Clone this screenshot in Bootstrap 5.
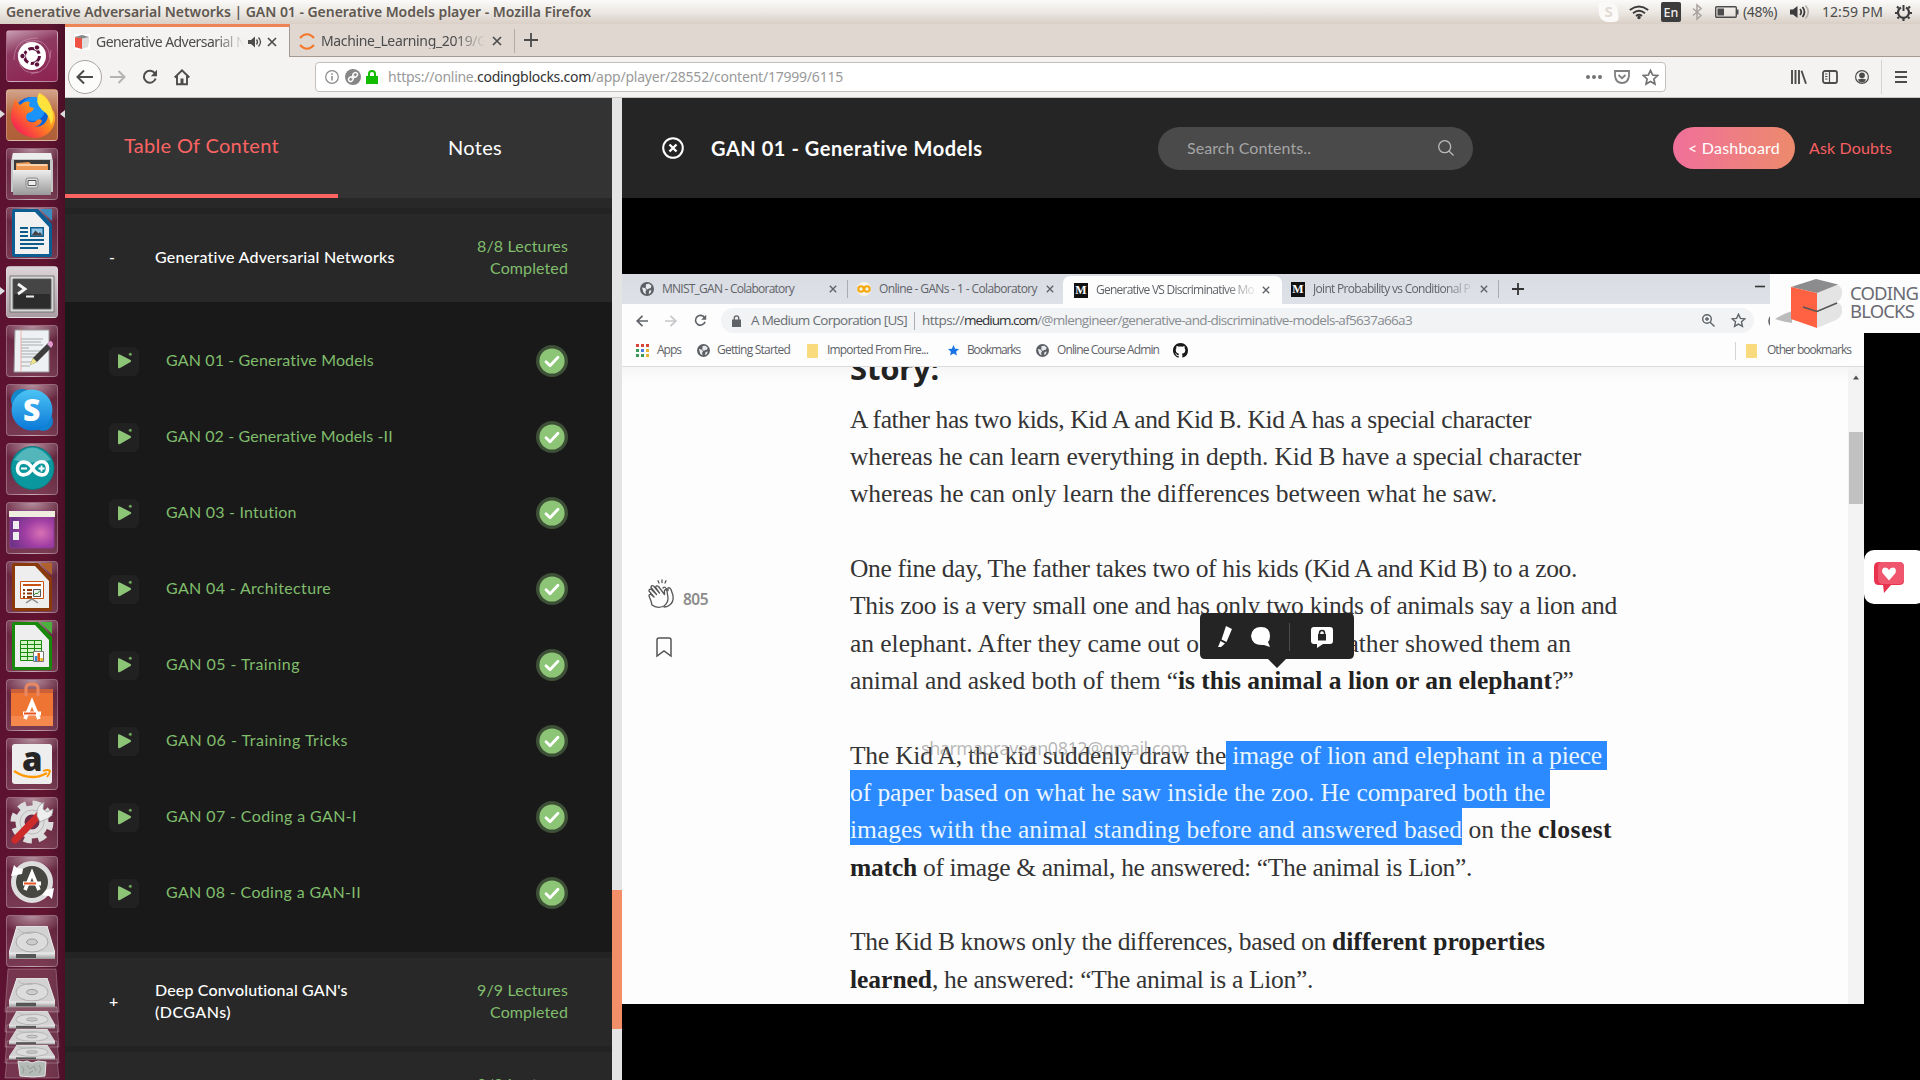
<!DOCTYPE html>
<html lang="en">
<head>
<meta charset="utf-8">
<title>Generative Adversarial Networks | GAN 01 - Generative Models player</title>
<link href="https://cdn.jsdelivr.net/npm/bootstrap@5.3.0/dist/css/bootstrap.min.css" rel="stylesheet">
<style>
html,body{width:1920px;height:1080px;overflow:hidden;background:#000}
body{font-family:"Noto Sans","Open Sans",sans-serif;font-size:14px;line-height:1.2;color:#4c4c4c}
svg{display:block;flex:none;overflow:visible}
.fit{white-space:pre;display:block}
.gridrow{display:grid;align-items:center;align-content:center}
/* desktop panel */
.topbar{height:24px;background:linear-gradient(#fbfaf9,#ece8e3 50%,#d9cfc6);padding-left:6px}
.topbar .ttl{font-weight:600;font-size:14px;color:#5f5851}
.indic{grid-template-columns:28px 32px 31px 23px 28px 47px 32px 73px 25px;width:319px;height:24px}
.indic .fit{font-size:14px}
.lang{width:20px;height:20px;background:#3c3c3c;color:#eee;border-radius:2px;font-size:12.5px;font-weight:500;line-height:21px;text-align:center}
/* launcher */
.launcher{width:65px;height:1056px;background:linear-gradient(90deg,#5c1230,#601430 70%,#4b0f27);padding:6px 0 0 6px;overflow:hidden;position:relative}
.tile{width:52px;height:52px;margin-bottom:7px;border-radius:4px;border:1px solid rgba(255,255,255,.25);background:radial-gradient(ellipse 34px 18px at 50% 0,rgba(255,255,255,.5),rgba(255,255,255,0)),linear-gradient(rgba(255,255,255,.06),rgba(255,255,255,.17));flex:none}
.tile svg{margin:-1px}
.tile.t-dash{background:linear-gradient(160deg,#c9a0b4,#8f3a62 35%,#8d2250)}
.tile.t-fox{background:linear-gradient(#d3a48c,#b5663c 50%,#b06038)}
.tile.t-term{background:linear-gradient(#dcd4d8,#a99ca2)}
.pip{position:absolute;width:0;height:0;border:4px solid transparent}
.pip.l{left:0;border-left:5px solid #ddd;border-right:0}
.pip.r{right:0;border-right:5px solid #ddd;border-left:0}
.pip.a{top:86px}.pip.b{top:263px}
.stack{margin:-5px 0 0 -1px}
/* browser chrome */
.win{width:1855px}
.tabs{height:33px;background:#dfd7d0;border-bottom:1px solid #a39a93}
.ftab{height:33px}
.ftab.on{width:225px;background:#f4f3f1;border-top:3px solid #ee8356;border-right:1px solid #a39a93;grid-template-columns:22px 152px 19px 14px;padding-left:9px}
.ftab.off{width:225px;grid-template-columns:22px 171px 21px;padding-left:9px;border-right:1px solid #b3aba4;height:24px;margin-top:5px}
.ftab .fit{font-size:14px;color:#4c4c4c}
.fade1{-webkit-mask-image:linear-gradient(90deg,#000 78%,transparent 98%)}
.fade2{-webkit-mask-image:linear-gradient(90deg,#000 78%,transparent 96%)}
.tools{height:41px;background:#f4f3f1;border-bottom:1px solid #cac6c3;padding-left:3px;grid-template-columns:42px 32px 32px 141px 1476px 31px 33px 26px 14px 25px}
.url{width:1351px;height:30px;border:1px solid #c3bfbc;border-radius:4px;background:#fff;grid-template-columns:20px 21px 22px 1198px 28px 28px 20px;padding-left:9px}
.url .fit{font-size:14px;color:#9a9a9a}
.url .dk{color:#333}
.vr1{width:1px;background:#d6d3d0;height:34px}
/* course sidebar */
.side{width:547px;height:982px;background:#282828;overflow:hidden;font-family:Lato,sans-serif;font-size:16px;color:#fff}
.sidehd{height:100px;background:#333;margin-bottom:10px}
.sidehd>div{width:273px;height:100px}
.sidehd .act{border-bottom:4px solid #fc6464;color:#fc6464;font-size:20px;padding-top:35px;padding-left:59px}
.sidehd .oth{font-size:20px;padding:37px 0 0 110px}
.band{height:6px;background:#232323}
.sec{height:88px;grid-template-columns:45px 242px 171px;padding:0 0 2px 45px;line-height:22px;font-weight:500}
.sec .pm{margin-left:-1px}
.sec .cnt{color:#80bd6c;font-weight:400}
.grn{color:#80bd6c;margin-top:-2px}
.lects{height:650px;background:#191919;padding:21px 0 0 44px}
.lect{height:76px;grid-template-columns:57px 370px 34px}
.scr{width:10px;height:982px;background:#e4e4e4;padding-top:792px}
.scr div{height:139px;background:#f28e68}
/* player */
.main{width:1298px;height:982px;background:#000;font-family:Lato,sans-serif}
.phead{height:100px;background:#252525;grid-template-columns:49px 447px 515px 136px 111px;padding-left:40px}
.phead .fit{margin-top:-1px}
.phead .ttl{font-size:20px;font-weight:700;color:#fff}
.srch{width:315px;height:43px;border-radius:22px;background:#4a4a4a;padding:0 19px 0 29px;font-size:16px;color:#a5a5a5}
.dash{width:122px;height:42px;border-radius:21px;background:linear-gradient(90deg,#f0709a,#ec8a6c);color:#fff;font-size:16px;padding-left:15px}
.ask{font-size:16px;color:#f75f62}
.video{width:1242px;height:730px;margin-top:76px;background:#fdfdfd;position:relative;font-family:"Open Sans","Noto Sans",sans-serif;color:#5f6368}
.vtabs{height:30px;background:linear-gradient(#d9dce2,#dee1e8);padding-left:18px;grid-template-columns:22px 167px 18px 10px 22px 167px 17px 228px 22px 167px 18px 14px 243px 20px}
.vtabs .fit,.vmarks .fit{font-size:12px}
.von{width:219px;height:28px;margin-top:2px;background:#fdfdfd;border-radius:7px 7px 0 0;grid-template-columns:22px 166px 20px;padding-left:11px}
.vsep{width:1px;height:18px;background:#a9adb3}
.vaddr{height:33px;padding-left:14px;grid-template-columns:29px 29px 27px 1046px 20px}
.vpill{width:1033px;height:25px;border-radius:13px;background:#f1f3f4;grid-template-columns:19px 163px 8px 780px 29px 20px;padding-left:11px;font-size:13.5px;color:#6a6e73}
.vpill .pa{color:#888c91}
.vpill .dk{color:#303236}
.vmarks{height:30px;border-bottom:1px solid #dcdcdc;padding:0 0 2px 14px;grid-template-columns:21px 40px 20px 90px 20px 120px 20px 69px 21px 116px 562px 11px 21px 90px}
.fold{width:11px;height:14px;background:#f9da7c;border-radius:1px}
.mm{width:14px;height:15px;background:#111;color:#fff;font:bold 12px/15px "Liberation Serif",serif;text-align:center}
.page{height:637px;background:linear-gradient(#f6f6f6,#fdfdfd 14px);overflow:hidden}
.rail{width:228px;padding:213px 0 0 26px}
.rail .n{font-size:15.5px;font-weight:600;font-family:"Noto Sans",sans-serif;color:#8c8c8c}
.art{width:998px;font-family:"Liberation Serif",serif;font-size:25.5px;color:#343434}
.art h3{display:flex;font:bold 31px/36px "Noto Sans",sans-serif;color:#222;height:29.8px;margin:0}
.art h3 span{margin-top:-17px}
.ln{display:flex;height:37.333px;line-height:46px}
.ln b{font-weight:700;color:#222}
.ln.gap{margin-bottom:37.333px}
.sel{background:#2b8aff;color:#e9f5ff;padding-right:5px;height:37.6px}
.sel.first{background:linear-gradient(transparent 8px,#2b8aff 8px)}
.sel.last{padding-right:0}
.vscr{width:16px;background:#f3f3f3;padding:7px 1px 0}
.vscr div{height:72px;background:#c1c1c1;margin-top:52px}
.logo{position:absolute;left:1148px;top:0;width:150px;height:59px;background:#fdfdfd;padding-left:5px}
.logo .nm{font:400 18.5px/18px "Noto Sans",sans-serif;color:#6a6b73;padding:10px 0 0 75px}
.logo svg{position:absolute;left:5px;top:5px}
.pop{position:absolute;left:578px;top:339px}
.wmk{position:absolute;left:299px;top:462px;font:18px/24px "Noto Sans",sans-serif;color:rgba(125,125,125,.55)}
.fb{position:absolute;left:1864px;top:550px;width:62px;height:54px;background:#fff;border-radius:10px;padding:12px 0 0 10px}
</style>
</head>
<body>
<svg width="0" height="0" class="position-absolute">
<defs>
<linearGradient id="gGrey" x1="0" y1="0" x2="0" y2="1"><stop offset="0" stop-color="#eee"/><stop offset="1" stop-color="#999"/></linearGradient>
<linearGradient id="gSky" x1="0" y1="0" x2="0" y2="1"><stop offset="0" stop-color="#4cc4f4"/><stop offset="1" stop-color="#0a78d8"/></linearGradient>
<linearGradient id="gFox" x1="1" y1="0" x2="0" y2="1"><stop offset="0" stop-color="#ffe040"/><stop offset=".45" stop-color="#ff8a1c"/><stop offset=".8" stop-color="#f8324a"/><stop offset="1" stop-color="#c0148c"/></linearGradient>
<radialGradient id="gPur" cx=".7" cy=".6" r=".7"><stop offset="0" stop-color="#d872b4"/><stop offset=".5" stop-color="#a23fa4"/><stop offset="1" stop-color="#6e3389"/></radialGradient>
<symbol id="x" viewBox="0 0 10 10"><path d="M1 1l8 8M9 1l-8 8" fill="none" stroke="currentColor" stroke-width="1.7"/></symbol>
<symbol id="globe" viewBox="0 0 14 14"><circle cx="7" cy="7" r="7" fill="#5c5f64"/><path d="M2 5.500l3 .5 1.500 2-1 1.500 .5 3-2.500-2zM6 2.200L9 1.800l2.500 2-.8 2.500-2 .2-1.200 1-1.800-1.500zM9.200 8.500l2.300-.3-.8 2.500-2 1.500z" fill="#e8eaed"/></symbol>
<symbol id="star" viewBox="0 0 16 16"><path d="M8 1.300l2 4.400 4.800.5-3.600 3.200 1 4.800L8 11.800l-4.200 2.400 1-4.800L1.200 6.200 6 5.700z"/></symbol>
<symbol id="disk" viewBox="0 0 46 34"><path d="M8 0h30l8 27H0z" fill="#d2d2d2" stroke="#efefef"/><ellipse cx="23" cy="16" rx="16" ry="10" fill="#dcdcdc" stroke="#aaa"/><ellipse cx="23" cy="16" rx="5.500" ry="3" fill="#ccc" stroke="#999"/><path d="M9 3q6 7 18 3" fill="none" stroke="#b5b5b5"/><path d="M0 27h46v6H0z" fill="url(#gGrey)"/><path d="M7 28h20v4H7z" fill="#555"/></symbol>
<symbol id="play" viewBox="0 0 30 29"><rect width="30" height="29" rx="6" fill="#212121"/><path d="M9 8.500q0-2 1.800-1L21.500 13q1.500 1 0 2L11 21q-2 1-2-1z" fill="#8dc577"/><circle cx="21.300" cy="7.300" r="1.500" fill="#6fa35c"/></symbol>
<symbol id="ok" viewBox="0 0 32 32"><circle cx="16" cy="16" r="16" fill="#3d4f36"/><circle cx="16" cy="16" r="12.600" fill="#8dc577"/><path d="M10 16.800l4 4 8-8.500" fill="none" stroke="#fff" stroke-width="2.800" stroke-linecap="round" stroke-linejoin="round"/></symbol>
<symbol id="reload" viewBox="0 0 16 16"><path d="M13.600 9.500A6 6 0 1 1 13 4.600" fill="none" stroke="currentColor" stroke-width="2"/><path d="M15 .8v6.400H8.800z" fill="currentColor"/></symbol>
</defs>
</svg>

<header class="topbar d-flex justify-content-between align-items-center">
  <span class="fit ttl" data-w="585">Generative Adversarial Networks | GAN 01 - Generative Models player - Mozilla Firefox</span>
  <div class="indic gridrow">
    <svg width="21" height="22" viewBox="0 0 21 22" transform="translate(-3,0)"><path d="M3 1h9q8 2 8 11 3 10-6 9H9q-8-2-8-9Q-1 3 3 1z" fill="#fbfaf9"/><text x="6.500" y="16" font-size="15" font-weight="700" fill="#e2dbd4">S</text></svg>
    <svg width="20" height="14" viewBox="0 0 20 14" fill="none" stroke="#3c3c3c" stroke-width="1.900"><path d="M.8 5Q10-2 19.200 5M4 8.200q6-4.700 12 0M7 11q3-2.300 6 0"/><circle cx="10" cy="12.500" r=".8"/></svg>
    <span class="lang">En</span>
    <svg width="10" height="16" viewBox="0 0 10 16" fill="none" stroke="#aaa39d" stroke-width="1.500"><path d="M1 4.500l8 7L5 15V1l4 3.500-8 7"/></svg>
    <svg width="24" height="12" viewBox="0 0 24 12"><rect x=".7" y=".7" width="20.600" height="10.600" rx="1" fill="none" stroke="#4c4c4c" stroke-width="1.400"/><path d="M2.500 2.500h6.500v7H2.500zM22 3.500h1.500v5H22z" fill="#4c4c4c"/></svg>
    <span class="fit" data-w="34">(48%)</span>
    <svg width="20" height="16" viewBox="0 0 20 16"><path d="M0 5.500h3L7.500 2v12L3 10.500H0z" fill="#3c3c3c"/><path d="M10 5q2.500 3 0 6M12.500 3q4 5 0 10" stroke="#3c3c3c" stroke-width="1.800" fill="none"/><path d="M15.500 1.500q5.500 6.500 0 13" stroke="#b5aea7" stroke-width="1.600" fill="none"/></svg>
    <span class="fit" data-w="61">12:59 PM</span>
    <svg width="17" height="17" viewBox="0 0 17 17" fill="none" stroke="#3c3c3c"><path d="M11 3.500a5.500 5.500 0 1 1-5 0" stroke-width="2.200"/><path d="M8.500 1v6" stroke-width="2"/><path d="M3.500 4L2 2.500M13.500 4L15 2.500M2.500 9H0M17 9h-2.500M4 13l-1.500 1.500M13 13l1.500 1.500M8.500 14v3" stroke-width="2.200"/></svg>
  </div>
</header>

<div class="d-flex">
<nav class="launcher d-flex flex-column">
  <i class="pip l a"></i><i class="pip r a"></i><i class="pip l b"></i>
  <div class="tile t-dash"><svg width="52" height="52" viewBox="0 0 52 52"><g fill="none" stroke="#d9a5bf" stroke-opacity=".5"><path d="M8 30Q8 8 32 8M20 12q22-6 24 16M45 20q0 22-20 24M32 42Q12 46 12 22"/></g><circle cx="26" cy="26" r="14" fill="#fff"/><circle cx="26" cy="26" r="7.500" fill="none" stroke="#5a1038" stroke-width="3" stroke-dasharray="13 2.700"/><g fill="#5a1038" stroke="#fff"><circle cx="16.500" cy="26" r="2.700"/><circle cx="31" cy="17.500" r="2.700"/><circle cx="31" cy="34.500" r="2.700"/></g></svg></div>
  <div class="tile t-fox"><svg width="52" height="52" viewBox="0 0 52 52"><circle cx="26" cy="27" r="19" fill="#0a62d8"/><circle cx="27" cy="20" r="12" fill="#1a94fb"/><path d="M9 10l5 6q5-5 10-3-2 3 0 5l4 1q-1 4-6 5-4 3 0 8 6 3 9-1 4-2 5 1-2 5-8 6 13 0 14-12 0-8-5-12-6-6-3-10 10 5 11 15 5 4 4 13-3 15-19 17Q9 47 5 30q0-8 2-13z" fill="url(#gFox)"/><path d="M33 4q12 8 13 17 3 8-1 15-1-10-9-15-8-8-3-17z" fill="#ffe33c"/></svg></div>
  <div class="tile"><svg width="52" height="52" viewBox="0 0 52 52"><path d="M7 5h38l2 8v31H5V13z" fill="#c5c7c7"/><path d="M7 5h38l1 6H6z" fill="#eceded"/><path d="M8 12h36v12H8z" fill="#3a3a3a"/><path d="M10 15l13-1 2 2h17v8H10z" fill="#ef9a54"/><path d="M11 17h30" stroke="#fce3c8" stroke-width="1.500"/><path d="M7 22h38v25H7z" fill="url(#gGrey)"/><rect x="20" y="30" width="12" height="10" rx="2" fill="#ddd" stroke="#888"/><path d="M22 32.500h8v5h-8z" fill="#eee" stroke="#555"/></svg></div>
  <div class="tile"><svg width="52" height="52" viewBox="0 0 52 52"><path d="M8 2h24l14 15v31q0 2-2 2H8q-2 0-2-2V4q0-2 2-2z" fill="#0b5d92"/><path d="M9 5h20l14 15v27H9z" fill="#f1f1f1"/><path d="M34 2h12v12z" fill="#3c8dbd"/><path d="M14 21h8M14 25h8M14 29h8M14 33h24M14 37h24M14 41h18" stroke="#0d5c8c" stroke-width="2"/><path d="M24 20h14v10H24z" fill="#0d5c8c"/><path d="M25.500 21.500h11v7h-11z" fill="#8fc5e8"/><path d="M25.500 28.500l4-5 3 3 1.500-1.500 2.500 3.500z" fill="#444"/></svg></div>
  <div class="tile t-term"><svg width="52" height="52" viewBox="0 0 52 52"><path d="M4 10h44v36H4z" fill="#d8d8d8" stroke="#777"/><path d="M7 13h38v30H7z" fill="#2c2c2c" stroke="#666"/><path d="M8 14h36v14H8z" fill="#454545"/><path d="M12 18l7 5-7 5" fill="none" stroke="#f3f3f3" stroke-width="2.800"/><path d="M20 30.500h8" stroke="#eee" stroke-width="2"/></svg></div>
  <div class="tile"><svg width="52" height="52" viewBox="0 0 52 52"><path d="M9 5h34v42H8z" fill="#eef1f3" stroke="#999"/><path d="M15 5v42" stroke="#f0b0b0"/><path d="M15 14h22M15 17h20M15 20h22M15 23h8M15 26h22M15 29h20M15 32h14M15 37h12M15 41h9" stroke="#aaa"/><path d="M24 40l3-7 15-15 4 4-15 15z" fill="#3d3d3d"/><path d="M24 40l3-7 4 4z" fill="#f1e58c"/><path d="M41 19l3-3q3 0 3 4l-2 3z" fill="#e09ad0"/></svg></div>
  <div class="tile"><svg width="52" height="52" viewBox="0 0 52 52"><circle cx="16" cy="16" r="11" fill="#1387c9"/><circle cx="37" cy="37" r="10" fill="#1182cf"/><circle cx="26" cy="26" r="20.500" fill="url(#gSky)"/><text x="17" y="37" font-family="Open Sans" font-weight="800" font-size="30" fill="#fff">S</text></svg></div>
  <div class="tile"><svg width="52" height="52" viewBox="0 0 52 52"><circle cx="26.500" cy="25" r="21.500" fill="#0a979d" stroke="#13757b"/><path d="M8 17Q26-8 45 17 26 22 8 17z" fill="#fff" opacity=".3"/><path d="M26.500 25.500c-5-9-15-8-15 0s10 9 15 0 15-9 15 0-10 8-15 0z" fill="none" stroke="#fff" stroke-width="3.600"/><path d="M15 25.500h6M32.500 25.500h6M35.500 22.500v6" stroke="#fff" stroke-width="1.800"/></svg></div>
  <div class="tile"><svg width="52" height="52" viewBox="0 0 52 52"><rect x="4" y="9" width="44" height="37" rx="2" fill="url(#gPur)" stroke="#8c3b97"/><path d="M3 9h46v6H3z" fill="#efece0"/><path d="M7 19h6v8H7zM7 30h6v8H7z" fill="#eee"/></svg></div>
  <div class="tile"><svg width="52" height="52" viewBox="0 0 52 52"><path d="M8 2h24l14 15v31q0 2-2 2H8q-2 0-2-2V4q0-2 2-2z" fill="#8a3a0a"/><path d="M9 5h20l14 15v27H9z" fill="#eee"/><path d="M34 2h12v12z" fill="#b0622e"/><path d="M14.500 20.500h23v17h-23z" fill="#fff" stroke="#c85214"/><path d="M17 24h18" stroke="#c85214" stroke-width="2"/><path d="M17 29h2m2 0h5M17 32.500h2m2 0h5M17 36h2m2 0h5" stroke="#8a3a0a" stroke-width="1.800"/><path d="M27.500 28.500h7v7h-7z" fill="#eee" stroke="#555"/><path d="M28 34l2-2 1 1 3-3.500" stroke="#2a9a2a" fill="none"/><path d="M20 42l6-4 6 4" fill="none" stroke="#888" stroke-width="1.500"/></svg></div>
  <div class="tile"><svg width="52" height="52" viewBox="0 0 52 52"><path d="M8 2h24l14 15v31q0 2-2 2H8q-2 0-2-2V4q0-2 2-2z" fill="#178a0c"/><path d="M9 5h20l14 15v27H9z" fill="#eee"/><path d="M34 2h12v12z" fill="#4bb03e"/><path d="M14.500 20.500h21v20h-21z" fill="#d5f5c8" stroke="#188a0c"/><path d="M14 24.500h22M14 28.500h22M14 32.500h22M14 36.500h22M21.500 20v20M28.500 20v20" stroke="#188a0c"/><path d="M27.500 31.500h10v10h-10z" fill="#fff" stroke="#777"/><path d="M30 36v5" stroke="#2a8ad8" stroke-width="2.500"/><path d="M32.700 33v8" stroke="#d85a14" stroke-width="2.500"/><path d="M35.600 38v3" stroke="#e8b414" stroke-width="2.500"/></svg></div>
  <div class="tile"><svg width="52" height="52" viewBox="0 0 52 52"><path d="M5 10h42v37H5z" fill="#ee7434"/><path d="M5 10h42v4H5z" fill="#c9603a"/><path d="M5 37h42v10H5z" fill="#f5884c"/><path d="M20 17V9q0-4 6-4t6 4v8" fill="none" stroke="#e98860" stroke-width="3"/><path d="M19 40l7-17 7 17" fill="none" stroke="#fff" stroke-width="3.600"/><path d="M17 34.500h18" stroke="#fff" stroke-width="4"/><path d="M18 34.500h12" stroke="#e95420" stroke-width="2"/></svg></div>
  <div class="tile"><svg width="52" height="52" viewBox="0 0 52 52"><rect x="6" y="6" width="40" height="40" rx="3" fill="#eee"/><text x="16" y="33" font-family="Open Sans" font-weight="800" font-size="33" fill="#262626">a</text><path d="M8 33q17 11 33 2" fill="none" stroke="#f90" stroke-width="2.400"/><path d="M37 33q5-2 7 0-1 4-3 6" fill="none" stroke="#f90" stroke-width="1.800"/></svg></div>
  <div class="tile"><svg width="52" height="52" viewBox="0 0 52 52"><circle cx="26" cy="25" r="18.500" fill="none" stroke="#dcdcdc" stroke-width="6" stroke-dasharray="8 6.530"/><circle cx="26" cy="25" r="12" fill="none" stroke="#dedede" stroke-width="9"/><circle cx="26" cy="25" r="12" fill="none" stroke="#bbb"/><path d="M9 43L33 18" stroke="#cf2a2a" stroke-width="7" stroke-linecap="round"/><path d="M31 19q-1-10 7-14l-1 7 4 3 6-3q0 9-9 11l-4 2z" fill="#eee" stroke="#999" stroke-width=".7"/></svg></div>
  <div class="tile"><svg width="52" height="52" viewBox="0 0 52 52"><circle cx="26" cy="26" r="18.500" fill="#474742" stroke="#dedede" stroke-width="5"/><path d="M5 20l3-11 3 3 6 1-1 5zM48 32l-2 11-3-3-7-1 4-5z" fill="#fff"/><path d="M19 34l7-17 7 17" fill="none" stroke="#fff" stroke-width="3.600"/><path d="M17 27.500h18" stroke="#fff" stroke-width="4"/><path d="M18 27.500h12" stroke="#e95420" stroke-width="2"/></svg></div>
  <div class="tile"><svg width="52" height="52" viewBox="0 0 52 52"><use href="#disk" x="3" y="11" width="46" height="34"/></svg></div>
  <svg class="stack" width="54" height="110" viewBox="0 0 54 110"><g fill="#fff" fill-opacity=".15" stroke="#fff" stroke-opacity=".25"><path d="M3 0h48l3 43H0z"/><path d="M2 38h50l2 25H0zM2 56h50l2 22H0zM2 72h50l2 22H0zM2 90h50l2 19H0z"/></g><svg x="4" y="9" width="46" height="30" viewBox="0 0 46 34" preserveAspectRatio="none"><use href="#disk" width="46" height="34"/></svg><svg x="4" y="42" width="46" height="18" viewBox="0 0 46 34" preserveAspectRatio="none"><use href="#disk" width="46" height="34"/></svg><svg x="4" y="60" width="46" height="16" viewBox="0 0 46 34" preserveAspectRatio="none"><use href="#disk" width="46" height="34"/></svg><svg x="4" y="76" width="46" height="15" viewBox="0 0 46 34" preserveAspectRatio="none"><use href="#disk" width="46" height="34"/></svg><path d="M13 92l5 1 4-1 5 2 6-2 8 1-1 14q-12 2-25 0z" fill="#b4bab5" stroke="#e5e8e5"/><path d="M16 97l3 3-1 4M22 96l3 4 4-3 2 5M24 104l4-2M34 96l2 4-2 4" fill="none" stroke="#949a95"/></svg>
</nav>

<div class="win">
  <div class="tabs d-flex align-items-start">
    <div class="ftab on gridrow">
      <svg width="16" height="16" viewBox="0 0 16 16"><path d="M0 0h16v16H0z" fill="#fff"/><path d="M1 3l7-2 7 2v5l-1 5-6 2-7-2z" fill="#ddd"/><path d="M1 3l7 1v11l-7-2z" fill="#ef5142"/><path d="M1 3l7-2 7 2-7 1.500z" fill="#888"/></svg>
      <span class="fit fade1" data-w="150">Generative Adversarial N</span>
      <svg width="14" height="12" viewBox="0 0 14 12"><path d="M0 4h3l4-3.500v11L3 8H0z" fill="#4c4c4c"/><path d="M8.500 3.500q2 2.500 0 5M10.500 1.500q4 4.500 0 9" fill="none" stroke="#4c4c4c" stroke-width="1.300"/></svg>
      <svg width="10" height="10"><use href="#x"/></svg>
    </div>
    <div class="ftab off gridrow">
      <svg width="16" height="17" viewBox="0 0 16 17" fill="none" stroke="#f37726" stroke-width="2"><path d="M1 5Q8-2.500 15 5M1 12q7 7.500 14 0"/></svg>
      <span class="fit fade2" data-w="166">Machine_Learning_2019/G</span>
      <svg width="10" height="10"><use href="#x"/></svg>
    </div>
    <svg width="14" height="14" viewBox="0 0 14 14" class="ms-2 mt-2" transform="translate(1,1)"><path d="M7 0v14M0 7h14" stroke="#4c4c4c" stroke-width="1.800"/></svg>
  </div>
  <div class="tools gridrow">
    <svg width="34" height="34" viewBox="0 0 34 34"><circle cx="17" cy="17" r="16.500" fill="#fcfcfb" stroke="#a8a4a0"/><path d="M25 17H10M16 10.500L9.500 17l6.500 6.500" fill="none" stroke="#4c4c4c" stroke-width="2"/></svg>
    <svg width="16" height="14" viewBox="0 0 16 14"><path d="M0 7h14M8.500 1l6 6-6 6" fill="none" stroke="#b5b3b1" stroke-width="2"/></svg>
    <svg width="16" height="16" color="#4c4c4c"><use href="#reload"/></svg>
    <svg width="16" height="16" viewBox="0 0 16 16"><path d="M.7 8.500L8 1.300l7.300 7.200M3 7v8.200h10V7" fill="none" stroke="#4c4c4c" stroke-width="1.900"/><path d="M6.500 9.500h3V15h-3z" fill="#4c4c4c"/></svg>
    <div class="url gridrow">
      <svg width="14" height="14" viewBox="0 0 14 14"><circle cx="7" cy="7" r="6.300" fill="none" stroke="#8a8a8a" stroke-width="1.200"/><path d="M7 6v4.500M7 3.300v1.500" stroke="#8a8a8a" stroke-width="1.500"/></svg>
      <svg width="16" height="16" viewBox="0 0 16 16"><circle cx="8" cy="8" r="8" fill="#868686"/><g transform="rotate(-45 8 8)" fill="none" stroke="#fff" stroke-width="1.400"><rect x="2.500" y="6" width="5" height="4" rx="2"/><rect x="8.500" y="6" width="5" height="4" rx="2"/><path d="M6 8h4"/></g></svg>
      <svg width="12" height="14" viewBox="0 0 12 14"><path d="M0 6h12v8H0z" fill="#12bc00"/><path d="M3 7V4q0-3 3-3t3 3v3" fill="none" stroke="#12bc00" stroke-width="2"/></svg>
      <div class="d-flex"><span class="fit" data-w="89">https://online.</span><span class="fit dk" data-w="114">codingblocks.com</span><span class="fit" data-w="252">/app/player/28552/content/17999/6115</span></div>
      <svg width="16" height="4" viewBox="0 0 16 4" fill="#737373"><circle cx="2" cy="2" r="2"/><circle cx="8" cy="2" r="2"/><circle cx="14" cy="2" r="2"/></svg>
      <svg width="16" height="14" viewBox="0 0 16 14" fill="none" stroke="#808080" stroke-width="1.800"><path d="M1 1h14v5q-1 7-7 7T1 6z"/><path d="M4.500 5L8 8.200 11.500 5"/></svg>
      <svg width="17" height="17" fill="none" stroke="#737373" stroke-width="1.600"><use href="#star"/></svg>
    </div>
    <svg width="16" height="14" viewBox="0 0 16 14" stroke="#4c4c4c" stroke-width="1.900"><path d="M1 0v14M4.500 0v14M8 0v14M10.500.8l4.500 13"/></svg>
    <svg width="16" height="14" viewBox="0 0 16 14" fill="none" stroke="#4c4c4c" stroke-width="1.800"><rect x="1" y="1" width="14" height="12" rx="2"/><path d="M7.500 1v12M3 4h2.500M3 6.500h2.500M3 9h2.500" stroke-width="1.200"/></svg>
    <svg width="14" height="14" viewBox="0 0 14 14"><circle cx="7" cy="7" r="6.400" fill="none" stroke="#4c4c4c" stroke-width="1.200"/><circle cx="7" cy="5.300" r="2.900" fill="#4c4c4c"/><path d="M2.800 9.500q4.200-1.500 8.400 0-1.400 3-4.200 3t-4.200-3z" fill="#4c4c4c"/></svg>
    <div class="vr1"></div>
    <svg width="12" height="12" viewBox="0 0 12 12" stroke="#4c4c4c" stroke-width="1.900"><path d="M0 1h12M0 6h12M0 11h12"/></svg>
  </div>

  <div class="d-flex">
    <aside class="side">
      <div class="sidehd d-flex"><div class="act"><span class="fit" data-w="155">Table Of Content</span></div><div class="oth"><span class="fit" data-w="54">Notes</span></div></div>
      <div class="band"></div>
      <div class="sec gridrow"><span class="pm">-</span><span class="fit" data-w="240">Generative Adversarial Networks</span>
        <div class="cnt d-flex flex-column align-items-end"><span class="fit" data-w="91">8/8 Lectures</span><span class="fit" data-w="78">Completed</span></div></div>
      <div class="lects" id="lects"></div>
      <div class="band"></div>
      <div class="sec gridrow"><span class="pm">+</span><div><span class="fit" data-w="193">Deep Convolutional GAN's</span><span class="fit" data-w="76">(DCGANs)</span></div>
        <div class="cnt d-flex flex-column align-items-end"><span class="fit" data-w="91">9/9 Lectures</span><span class="fit" data-w="78">Completed</span></div></div>
      <div class="band"></div>
      <div class="sec gridrow"><span></span><span></span>
        <div class="cnt d-flex flex-column align-items-end"><span class="fit" data-w="91">8/8 Lectures</span><span class="fit" data-w="78">Completed</span></div></div>
    </aside>
    <div class="scr"><div></div></div>

    <main class="main">
      <div class="phead gridrow">
        <svg width="22" height="22" viewBox="0 0 22 22" fill="none" stroke="#fff" stroke-width="2"><circle cx="11" cy="11" r="9.800"/><path d="M7.500 7.500l7 7M14.500 7.500l-7 7" stroke-width="2.400"/></svg>
        <span class="fit ttl" data-w="272">GAN 01 - Generative Models</span>
        <div class="srch d-flex align-items-center justify-content-between"><span class="fit" data-w="124">Search Contents..</span>
          <svg width="16" height="16" viewBox="0 0 16 16" fill="none" stroke="#bbb" stroke-width="1.300"><circle cx="6.700" cy="6.700" r="6"/><path d="M11 11l4.500 4.500"/></svg></div>
        <div class="dash d-flex align-items-center"><span class="fit" data-w="92">&lt; Dashboard</span></div>
        <span class="ask fit" data-w="83">Ask Doubts</span>
      </div>
      <div class="video">
        <div class="vtabs gridrow">
          <svg width="14" height="14"><use href="#globe"/></svg><span class="fit" data-w="132">MNIST_GAN - Colaboratory</span><svg width="8" height="8"><use href="#x"/></svg><i class="vsep"></i>
          <svg width="14" height="14" viewBox="0 0 14 14"><circle cx="7" cy="7" r="7" fill="#f6f3ea"/><g fill="none" stroke="#f5a70a" stroke-width="2"><circle cx="4" cy="7" r="2.700"/><circle cx="10" cy="7" r="2.700"/></g></svg><span class="fit" data-w="158">Online - GANs - 1 - Colaboratory</span><svg width="8" height="8"><use href="#x"/></svg>
          <div class="von gridrow"><span class="mm">M</span><span class="fit fade1" data-w="158">Generative VS Discriminative Mo</span><svg width="8" height="8"><use href="#x"/></svg></div>
          <span class="mm">M</span><span class="fit fade1" data-w="157">Joint Probability vs Conditional P</span><svg width="8" height="8"><use href="#x"/></svg><i class="vsep"></i>
          <svg width="12" height="12" viewBox="0 0 12 12"><path d="M6 0v12M0 6h12" stroke="#333" stroke-width="1.800"/></svg>
          <svg width="10" height="10" viewBox="0 0 10 10"><path d="M0 2.500h10" stroke="#333" stroke-width="1.600"/></svg>
        </div>
        <div class="vaddr gridrow">
          <svg width="12" height="12" viewBox="0 0 12 12"><path d="M12 6H1.500M6.500.8L1.200 6l5.300 5.200" fill="none" stroke="#5f6368" stroke-width="1.700"/></svg>
          <svg width="12" height="12" viewBox="0 0 12 12"><path d="M0 6h10.500M5.500.8L10.800 6l-5.300 5.200" fill="none" stroke="#c4c6c9" stroke-width="1.700"/></svg>
          <svg width="13" height="13" color="#5f6368"><use href="#reload"/></svg>
          <div class="vpill gridrow">
            <svg width="9" height="12" viewBox="0 0 9 12"><path d="M0 4.500h9V12H0z" fill="#5f6368"/><path d="M2.300 5V3q0-2.200 2.200-2.200T6.700 3v2" fill="none" stroke="#5f6368" stroke-width="1.300"/></svg>
            <span class="fit" data-w="156">A Medium Corporation [US]</span><i class="vsep"></i>
            <div class="d-flex"><span class="fit" data-w="42">https://</span><span class="fit dk" data-w="73">medium.com</span><span class="fit pa" data-w="375">/@mlengineer/generative-and-discriminative-models-af5637a66a3</span></div>
            <svg width="13" height="13" viewBox="0 0 13 13" fill="none" stroke="#5f6368" stroke-width="1.400"><circle cx="5" cy="5" r="4.300"/><path d="M8.200 8.200l4.300 4.300M3 5h4M5 3v4"/></svg>
            <svg width="15" height="15" fill="none" stroke="#5f6368" stroke-width="1.500"><use href="#star"/></svg>
          </div>
          <svg width="5" height="12" viewBox="0 0 5 12"><path d="M4 1Q0 6 4 11" fill="none" stroke="#5f6368" stroke-width="1.600"/></svg>
        </div>
        <div class="vmarks gridrow">
          <svg width="13" height="13" viewBox="0 0 13 13"><path d="M0 1.500h3M5 1.500h3M10 1.500h3" stroke="#d8463a" stroke-width="3"/><path d="M5 6.500h3" stroke="#4a80e0" stroke-width="3"/><path d="M10 6.500h3M10 11.500h3" stroke="#e6b430" stroke-width="3"/><path d="M0 6.500h3M0 11.500h3M5 11.500h3" stroke="#3b9a55" stroke-width="3"/></svg>
          <span class="fit" data-w="24">Apps</span><svg width="13" height="13"><use href="#globe"/></svg><span class="fit" data-w="73">Getting Started</span><i class="fold"></i><span class="fit" data-w="101">Imported From Fire...</span>
          <svg width="13" height="13" fill="#1a73e8"><use href="#star"/></svg><span class="fit" data-w="53">Bookmarks</span><svg width="13" height="13"><use href="#globe"/></svg><span class="fit" data-w="102">Online Course Admin</span>
          <svg width="15" height="15" viewBox="0 0 16 16"><path fill="#191717" d="M8 0C3.580 0 0 3.580 0 8c0 3.540 2.290 6.530 5.470 7.590.4.070.55-.17.55-.38 0-.19-.01-.82-.01-1.490-2.010.37-2.530-.49-2.690-.94-.09-.23-.48-.94-.82-1.130-.28-.15-.68-.52-.01-.53.63-.01 1.080.58 1.230.82.72 1.210 1.870.87 2.330.66.07-.52.28-.87.51-1.070-1.780-.2-3.640-.89-3.640-3.950 0-.87.31-1.590.82-2.150-.08-.2-.36-1.020.08-2.120 0 0 .67-.21 2.200.82.64-.18 1.320-.27 2-.27s1.360.09 2 .27c1.530-1.040 2.200-.82 2.200-.82.44 1.100.16 1.920.08 2.120.51.56.82 1.270.82 2.150 0 3.070-1.870 3.750-3.650 3.950.29.25.54.73.54 1.480 0 1.070-.01 1.930-.01 2.200 0 .21.15.46.55.38A8 8 0 0 0 16 8c0-4.420-3.580-8-8-8z"/></svg>
          <i class="vsep opacity-50"></i><i class="fold"></i><span class="fit" data-w="84">Other bookmarks</span>
        </div>
        <div class="page d-flex">
          <div class="rail">
            <div class="d-flex align-items-center"><svg width="27" height="30" viewBox="0 0 27 30" fill="none" stroke="#555" stroke-width="1.300" stroke-linecap="round" stroke-linejoin="round"><path d="M11 3L10 .8M14 2.500V0M17 3l1-2.200"/><path d="M3 21l-2-5q0-2 2-1.500L6 17l-5-6q0-2.500 2.500-1.500l5 5-5.500-7q0-2.500 2.500-1.500l6 7-4-6q1-2 3-.5l6 8v-4q1-2 2.500.5l1 7q0 5-4 8-7 3-12-1z"/><path d="M15 8q2-2 3.500 1l1.500 1.500V8q1.500-1 3 1.500l2 6q1 7-4 10-2 1.500-5 1.500"/></svg><span class="n fit ms-2 mt-2" data-w="25">805</span></div>
            <svg width="16" height="20" viewBox="0 0 16 20" class="mt-4 ms-2" transform="translate(0,3)"><path d="M1 3q0-2 2-2h10q2 0 2 2v16l-7-5-7 5z" fill="none" stroke="#555" stroke-width="1.500"/></svg>
          </div>
          <article class="art">
            <h3><span class="fit" data-w="89">Story:</span></h3>
            <div class="ln"><span class="fit" data-w="681">A father has two kids, Kid A and Kid B. Kid A has a special character</span></div>
            <div class="ln"><span class="fit" data-w="731">whereas he can learn everything in depth. Kid B have a special character</span></div>
            <div class="ln gap"><span class="fit" data-w="647">whereas he can only learn the differences between what he saw.</span></div>
            <div class="ln"><span class="fit" data-w="727">One fine day, The father takes two of his kids (Kid A and Kid B) to a zoo.</span></div>
            <div class="ln"><span class="fit" data-w="767">This zoo is a very small one and has only two kinds of animals say a lion and</span></div>
            <div class="ln"><span class="fit" data-w="349">an elephant. After they came out o</span><span class="fit" data-w="372">f the zoo, the father showed them an</span></div>
            <div class="ln gap"><span class="fit" data-w="328">animal and asked both of them “</span><b class="fit" data-w="374">is this animal a lion or an elephant</b><span class="fit" data-w="21">?”</span></div>
            <div class="ln"><span class="fit" data-w="376">The Kid A, the kid suddenly draw the</span><span class="fit sel first" data-w="376"> image of lion and elephant in a piece</span></div>
            <div class="ln"><span class="fit sel" data-w="695">of paper based on what he saw inside the zoo. He compared both the</span></div>
            <div class="ln"><span class="fit sel last" data-w="612">images with the animal standing before and answered based</span><span class="fit" data-w="76"> on the </span><b class="fit" data-w="74">closest</b></div>
            <div class="ln gap"><b class="fit" data-w="67">match</b><span class="fit" data-w="555"> of image &amp; animal, he answered: “The animal is Lion”.</span></div>
            <div class="ln"><span class="fit" data-w="482">The Kid B knows only the differences, based on </span><b class="fit" data-w="213">different properties</b></div>
            <div class="ln"><b class="fit" data-w="82">learned</b><span class="fit" data-w="381">, he answered: “The animal is a Lion”.</span></div>
          </article>
          <div class="vscr"><svg width="14" height="6" viewBox="0 0 14 6"><path d="M4 5.500l3-4 3 4z" fill="#505050"/></svg><div></div></div>
        </div>
        <svg class="pop" width="154" height="56" viewBox="0 0 154 56"><path d="M5 0h144q5 0 5 5v36q0 5-5 5H86l-9 9-9-9H5q-5 0-5-5V5q0-5 5-5z" fill="#242424"/><path d="M26 13l6 3-5.500 13-5-2.500zM20.500 28l4.500 2.500-4 3.500h-3z" fill="#fff"/><path d="M61 14q9 0 9 9 0 4-2 6l2 5-6-2q-12 1-13-9 1-9 10-9z" fill="#fff"/><path d="M89.500 10v28" stroke="#4c4c4c"/><path d="M114 14h16q3 0 3 3v11q0 3-3 3h-7l-6 4v-4h-3q-3 0-3-3V17q0-3 3-3z" fill="#fff"/><path d="M118 21h8v6.500h-8z" fill="#242424"/><path d="M119.500 22v-2q0-2.500 2.500-2.500t2.500 2.500v2" fill="none" stroke="#242424" stroke-width="1.500"/></svg>
        <span class="wmk fit" data-w="266">sharmapraveen0812@gmail.com</span>
        <div class="logo"><svg width="70" height="50" viewBox="0 0 70 50"><path d="M0 40q8-5 17-8v12Q8 43 0 40z" fill="#bbb"/><path d="M42 14l20-9q6 4 5 9 0 6-5 9 6 3 5 9 0 6-6 9l-19 8z" fill="#e4e4e4"/><path d="M16 8L41 0l22 5.500L42 14z" fill="#8c8c8f"/><path d="M16 8l26 6v35l-26-9z" fill="#ff6242"/><path d="M28 28l14 4.500L62 24" fill="none" stroke="#555" stroke-width="1.600"/></svg>
          <div class="nm"><span class="fit" data-w="68">CODING</span><span class="fit" data-w="64">BLOCKS</span></div></div>
      </div>
    </main>
  </div>
</div>
</div>
<div class="fb"><svg width="30" height="31" viewBox="0 0 30 31"><path d="M5 0h20q5 0 5 5v14q0 4-5 4H17l-7 8-1-8H5q-5 0-5-5V5q0-5 5-5z" fill="#e8334f"/><path d="M8 0h17q5 0 5 5v12q0 5-5 5H9q-5 0-5-5V5q0-5 4-5z" fill="#f0566d"/><path d="M15 18.500L8.500 11Q7 6 11 5.500q3 0 4 2.500 1-2.500 4-2.500 4 .5 2.500 5.500z" fill="#fff"/></svg></div>

<script src="https://cdn.jsdelivr.net/npm/bootstrap@5.3.0/dist/js/bootstrap.bundle.min.js"></script>
<script>
const lectures = [["GAN 01 - Generative Models",208],["GAN 02 - Generative Models -II",227],["GAN 03 - Intution",131],["GAN 04 - Architecture",165],["GAN 05 - Training",134],["GAN 06 - Training Tricks",182],["GAN 07 - Coding a GAN-I",191],["GAN 08 - Coding a GAN-II",195]];
document.getElementById("lects").innerHTML = lectures.map(([name, w]) =>
  `<div class="lect gridrow"><svg width="30" height="29"><use href="#play"/></svg><span class="fit grn" data-w="${w}">${name}</span><svg width="32" height="32"><use href="#ok"/></svg></div>`).join("");
document.querySelectorAll(".fit[data-w]").forEach(el => {
  const r = document.createRange();
  r.selectNodeContents(el);
  const gap = el.dataset.w - r.getBoundingClientRect().width;
  el.style.letterSpacing = (gap / el.textContent.length).toFixed(3) + "px";
});
</script>
</body>
</html>
